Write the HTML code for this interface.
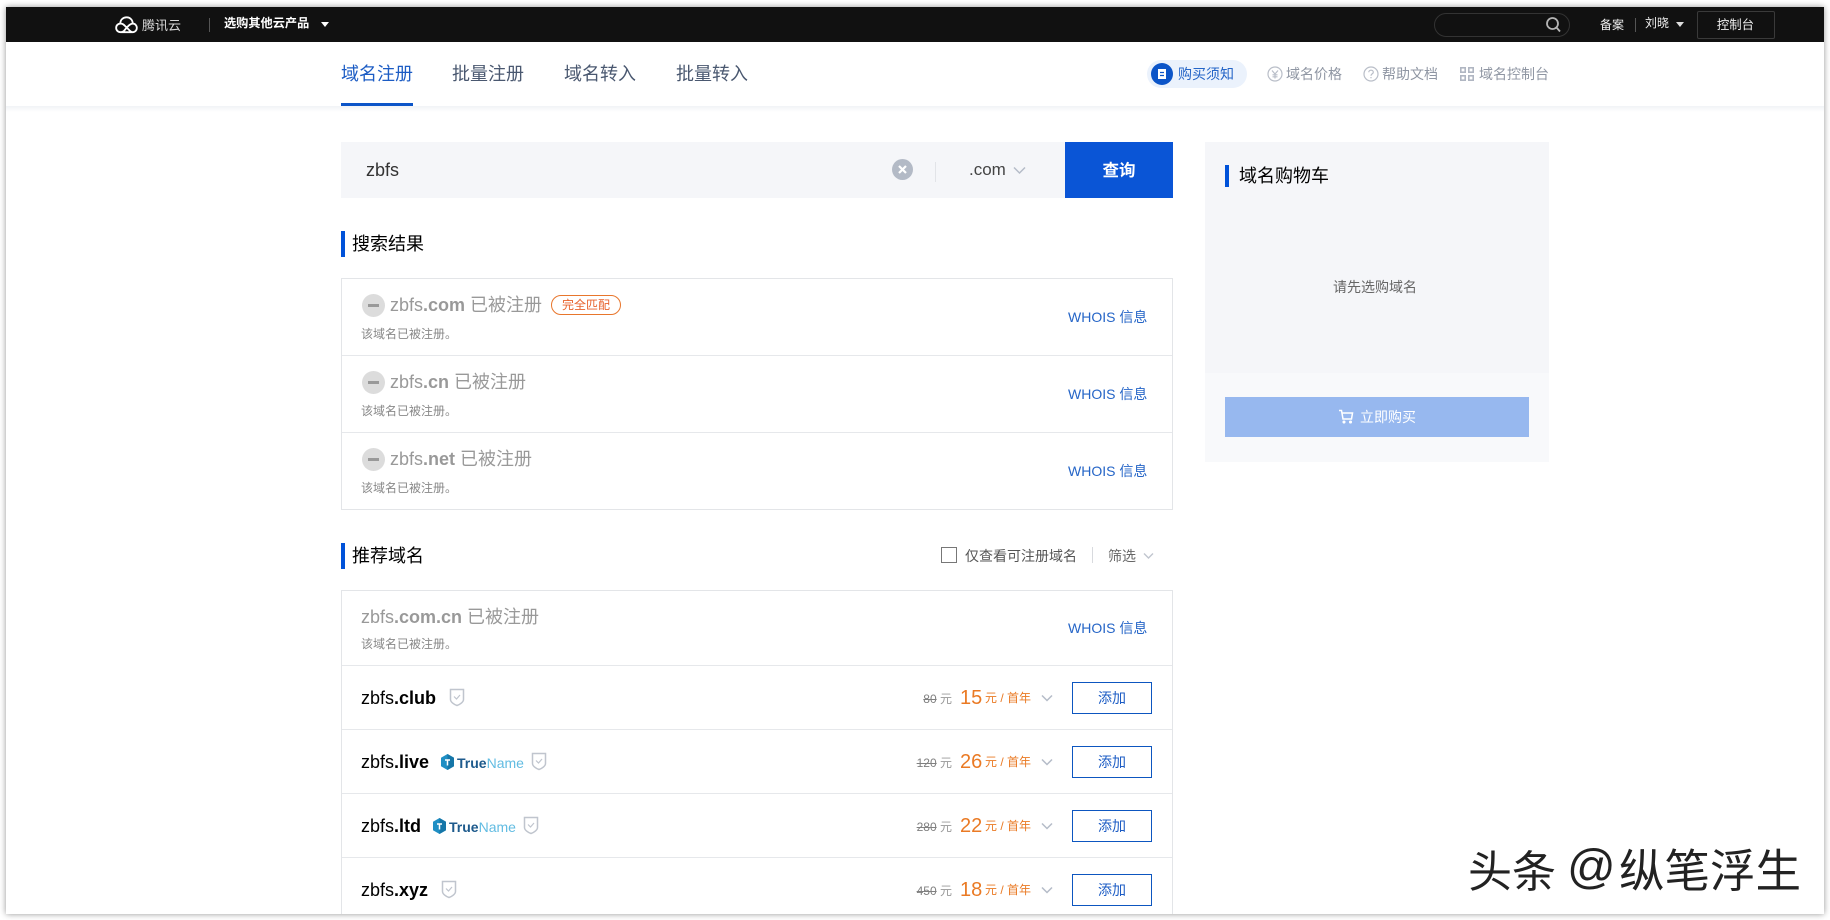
<!DOCTYPE html>
<html lang="zh-CN"><head><meta charset="utf-8"><title>域名注册</title>
<style>
html,body{margin:0;padding:0;background:#fff;width:1830px;height:920px;overflow:hidden}
body{font-family:"Liberation Sans","Noto Sans CJK SC",sans-serif;position:relative}
#w{position:absolute;left:6px;top:7px;width:1818px;height:907px;background:#fff;box-shadow:0 0 6px rgba(0,0,0,.42);}
#clip{position:absolute;left:6px;top:7px;width:1818px;height:907px;overflow:hidden}
#in{position:absolute;left:-6px;top:-7px;width:1830px;height:920px}
.a{position:absolute;white-space:nowrap}
.t{position:absolute;white-space:nowrap;height:20px;line-height:20px}
.tab{font-size:18px;color:#4a5870;top:64px}
.rn{font-size:14px;color:#8f96a3;top:64px}
.h{font-size:18px;color:#000;}
.bar{position:absolute;width:4px;background:#0052d9}
.box{position:absolute;left:341px;width:830px;border:1px solid #e3e5e8;background:#fff}
.line{position:absolute;left:342px;width:830px;height:1px;background:#e6e8eb}
.dm{font-size:18px;color:#999}
.dm b{font-weight:700}
.sub{font-size:12px;color:#888}
.who{font-size:14px;color:#2565c7;}
.name{font-size:18px;color:#000}
.old{font-size:12px;color:#999;text-align:right;width:60px;left:892px}
.old s{color:#808080}
.pr{font-size:20px;color:#ea7a24;left:960px}
.un{font-size:12px;color:#ea7a24;left:985px}
.btn{position:absolute;left:1072px;width:78px;height:30px;border:1px solid #0d56c0;color:#1c5cc4;font-size:14px;line-height:30px;text-align:center;background:#fff}
.tn{font-size:14px;font-weight:700;color:#1d5a8c}
.tn span{color:#62bce2;font-weight:400}
</style></head><body>
<div id="w"></div>
<div id="clip"><div id="in">

<!-- top bar -->
<div class="a" style="left:0;top:7px;width:1830px;height:35px;background:#111"></div>
<svg class="a" style="left:115px;top:16px" width="23" height="18" viewBox="0 0 24 18" fill="none" stroke="#fff" stroke-width="1.900"><path d="M6 16.500C3 16.500 1.200 14.500 1.200 12S3 7.500 6 7.500C7.500 7.500 9 8.300 11 10.500L15 14.500C16.500 16 17.500 16.500 18.500 16.500C21 16.500 22.800 14.500 22.800 12S21 7.500 18.500 7.500C16.500 7.500 15 8.500 12 12L9.500 15C8.500 16 7.500 16.500 6 16.500H18.500"/><path d="M5.500 7.500C5.500 3.500 8.500 1 12 1C15.500 1 18.500 3.500 18.500 7.500"/></svg>
<div class="t" style="left:142px;top:16px;font-size:13px;color:#d8d8d8">腾讯云</div>
<div class="a" style="left:209px;top:18px;width:1px;height:14px;background:#555"></div>
<div class="t" style="left:224px;top:13px;font-size:12.200px;font-weight:700;color:#fff">选购其他云产品</div>
<div class="a" style="left:321px;top:22px;width:0;height:0;border:4px solid transparent;border-top:5px solid #fff;border-bottom:0"></div>

<div class="a" style="left:1434px;top:13px;width:134px;height:22px;border:1px solid #333;border-radius:12px"></div>
<svg class="a" style="left:1545px;top:16px" width="16" height="17" viewBox="0 0 16 17" fill="none" stroke="#b4b4b4" stroke-width="1.800"><circle cx="7.500" cy="7.500" r="5.500"/><path d="M11.500 11.500L15 15.500"/></svg>
<div class="t" style="left:1600px;top:15px;font-size:12px;color:#eee">备案</div>
<div class="a" style="left:1635px;top:18px;width:1px;height:14px;background:#555"></div>
<div class="t" style="left:1645px;top:13px;font-size:12px;color:#eee">刘晓</div>
<div class="a" style="left:1676px;top:22px;width:0;height:0;border:4px solid transparent;border-top:5px solid #ddd;border-bottom:0"></div>
<div class="a" style="left:1697px;top:11px;width:76px;height:26px;border:1px solid #3a3a3a;border-radius:2px;color:#eee;font-size:12.400px;line-height:27px;text-align:center;text-indent:-1px">控制台</div>

<!-- nav -->
<div class="a" style="left:0;top:106px;width:1830px;height:6px;background:linear-gradient(#f1f3f6,#fff)"></div>
<div class="t tab" style="left:341px;color:#1c5cc4">域名注册</div>
<div class="a" style="left:341px;top:103px;width:72px;height:3px;background:#0c55c8"></div>
<div class="t tab" style="left:452px">批量注册</div>
<div class="t tab" style="left:564px">域名转入</div>
<div class="t tab" style="left:676px">批量转入</div>

<div class="a" style="left:1147px;top:60px;width:100px;height:28px;border-radius:14px;background:#ebf2fc"></div>
<div class="a" style="left:1151px;top:63px;width:22px;height:22px;border-radius:50%;background:#0c55c8"></div>
<svg class="a" style="left:1157px;top:68px" width="10" height="12" viewBox="0 0 10 12"><path d="M1 1H9V11H1Z" fill="#fff"/><path d="M3 4.500H7M3 7.500H7" stroke="#0c55c8" stroke-width="1.200"/></svg>
<div class="t rn" style="left:1178px;color:#2565c7">购买须知</div>
<svg class="a" style="left:1267px;top:66px" width="16" height="16" viewBox="0 0 16 16" fill="none" stroke="#b9bec8" stroke-width="1.200"><circle cx="8" cy="8" r="7"/><path d="M5 4.500L8 8L11 4.500M8 8V12.500M5.500 8.800H10.500M5.500 10.800H10.500"/></svg>
<div class="t rn" style="left:1286px">域名价格</div>
<svg class="a" style="left:1363px;top:66px" width="16" height="16" viewBox="0 0 16 16" fill="none" stroke="#b9bec8" stroke-width="1.200"><circle cx="8" cy="8" r="7"/><path d="M5.800 6.200C5.800 3.500 10.300 3.500 10.300 6.200C10.300 7.800 8 7.800 8 9.800M8 11V12.300"/></svg>
<div class="t rn" style="left:1382px">帮助文档</div>
<svg class="a" style="left:1460px;top:67px" width="14" height="14" viewBox="0 0 14 14" fill="none" stroke="#b0b6c2" stroke-width="1.600"><rect x=".8" y=".8" width="4.400" height="4.400"/><rect x="8.800" y=".8" width="4.400" height="4.400"/><rect x=".8" y="8.800" width="4.400" height="4.400"/><rect x="8.800" y="8.800" width="4.400" height="4.400"/></svg>
<div class="t rn" style="left:1479px">域名控制台</div>

<!-- search -->
<div class="a" style="left:341px;top:142px;width:832px;height:56px;background:#f5f6f9"></div>
<div class="t" style="left:366px;top:160px;font-size:18px;color:#333">zbfs</div>
<svg class="a" style="left:892px;top:159px" width="21" height="21" viewBox="0 0 21 21"><circle cx="10.500" cy="10.500" r="10.500" fill="#b3bac6"/><path d="M7 7L14 14M14 7L7 14" stroke="#fff" stroke-width="2.200"/></svg>
<div class="a" style="left:935px;top:162px;width:1px;height:20px;background:#e2e4e8"></div>
<div class="t" style="left:969px;top:160px;font-size:17px;color:#444">.com</div>
<svg class="a" style="left:1013px;top:166px" width="13" height="9" viewBox="0 0 13 9" fill="none" stroke="#b5bcc8" stroke-width="1.500"><path d="M1 1.500L6.500 7L12 1.500"/></svg>
<div class="a" style="left:1065px;top:142px;width:108px;height:56px;background:#0a55d6;color:#fff;font-size:16.500px;font-weight:700;line-height:58px;text-align:center">查询</div>

<!-- results -->
<div class="bar" style="left:341px;top:231px;height:26px"></div>
<div class="t h" style="left:352px;top:234px">搜索结果</div>
<div class="box" style="top:278px;height:230px"></div>
<div class="line" style="top:355px"></div>
<div class="line" style="top:432px"></div>

<div class="a" style="left:362px;top:294px;width:23px;height:23px;border-radius:50%;background:#dcdcdc"></div>
<div class="a" style="left:368px;top:304px;width:11px;height:3px;background:#999"></div>
<div class="t dm" style="left:390px;top:295px">zbfs<b>.com</b> 已被注册</div>
<div class="a" style="left:551px;top:295px;width:68px;height:18px;border:1px solid #e8762c;border-radius:10px;color:#e8622c;font-size:12px;line-height:19px;text-align:center">完全匹配</div>
<div class="t sub" style="left:361px;top:324px">该域名已被注册。</div>
<div class="t who" style="left:1068px;top:307px">WHOIS 信息</div>

<div class="a" style="left:362px;top:371px;width:23px;height:23px;border-radius:50%;background:#dcdcdc"></div>
<div class="a" style="left:368px;top:381px;width:11px;height:3px;background:#999"></div>
<div class="t dm" style="left:390px;top:372px">zbfs<b>.cn</b> 已被注册</div>
<div class="t sub" style="left:361px;top:401px">该域名已被注册。</div>
<div class="t who" style="left:1068px;top:384px">WHOIS 信息</div>

<div class="a" style="left:362px;top:448px;width:23px;height:23px;border-radius:50%;background:#dcdcdc"></div>
<div class="a" style="left:368px;top:458px;width:11px;height:3px;background:#999"></div>
<div class="t dm" style="left:390px;top:449px">zbfs<b>.net</b> 已被注册</div>
<div class="t sub" style="left:361px;top:478px">该域名已被注册。</div>
<div class="t who" style="left:1068px;top:461px">WHOIS 信息</div>

<!-- recommended -->
<div class="bar" style="left:341px;top:543px;height:26px"></div>
<div class="t h" style="left:352px;top:546px">推荐域名</div>
<div class="a" style="left:941px;top:547px;width:14px;height:14px;border:1px solid #777"></div>
<div class="t" style="left:965px;top:546px;font-size:14px;color:#555">仅查看可注册域名</div>
<div class="a" style="left:1092px;top:547px;width:1px;height:16px;background:#d8dade"></div>
<div class="t" style="left:1108px;top:546px;font-size:14px;color:#666">筛选</div>
<svg class="a" style="left:1143px;top:552px" width="11" height="8" viewBox="0 0 11 8" fill="none" stroke="#c0c5ce" stroke-width="1.400"><path d="M1 1.500L5.500 6L10 1.500"/></svg>

<div class="box" style="top:590px;height:340px"></div>
<div class="line" style="top:665px"></div>
<div class="line" style="top:729px"></div>
<div class="line" style="top:793px"></div>
<div class="line" style="top:857px"></div>

<div class="t dm" style="left:361px;top:607px">zbfs<b>.com.cn</b> 已被注册</div>
<div class="t sub" style="left:361px;top:634px">该域名已被注册。</div>
<div class="t who" style="left:1068px;top:618px">WHOIS 信息</div>

<!-- club -->
<div class="t name" style="left:361px;top:688px">zbfs<b>.club</b></div>
<svg class="a" style="left:449px;top:688px" width="16" height="19" viewBox="0 0 16 19" fill="none"><path d="M1.500 1.500H14.500V11.500C14.500 14 11 16.500 8 17.500C5 16.500 1.500 14 1.500 11.500Z" stroke="#c0c5ce" stroke-width="1.500"/><path d="M5 8.500L7.500 11L11 7" stroke="#c0c5ce" stroke-width="1.200"/></svg>
<div class="t old" style="top:689px"><s>80</s> 元</div>
<div class="t pr" style="top:688px">15</div>
<div class="t un" style="top:688px">元 / 首年</div>
<svg class="a" style="left:1041px;top:694px" width="12" height="9" viewBox="0 0 12 9" fill="none" stroke="#b5bcc8" stroke-width="1.500"><path d="M1 1.500L6 6.500L11 1.500"/></svg>
<div class="btn" style="top:682px">添加</div>

<!-- live -->
<div class="t name" style="left:361px;top:752px">zbfs<b>.live</b></div>
<svg class="a" style="left:441px;top:754px" width="13" height="16" viewBox="0 0 13 16"><path d="M6.500 0L13 3.700V12.300L6.500 16L0 12.300V3.700Z" fill="#1f8fc4"/><path d="M6.500 0L13 3.700V12.300L6.500 16Z" fill="#1576a8"/><path d="M4 6H9M6.500 6V11.500" stroke="#fff" stroke-width="1.500"/></svg>
<div class="t tn" style="left:457px;top:753px">True<span>Name</span></div>
<svg class="a" style="left:531px;top:752px" width="16" height="19" viewBox="0 0 16 19" fill="none"><path d="M1.500 1.500H14.500V11.500C14.500 14 11 16.500 8 17.500C5 16.500 1.500 14 1.500 11.500Z" stroke="#c0c5ce" stroke-width="1.500"/><path d="M5 8.500L7.500 11L11 7" stroke="#c0c5ce" stroke-width="1.200"/></svg>
<div class="t old" style="top:753px"><s>120</s> 元</div>
<div class="t pr" style="top:752px">26</div>
<div class="t un" style="top:752px">元 / 首年</div>
<svg class="a" style="left:1041px;top:758px" width="12" height="9" viewBox="0 0 12 9" fill="none" stroke="#b5bcc8" stroke-width="1.500"><path d="M1 1.500L6 6.500L11 1.500"/></svg>
<div class="btn" style="top:746px">添加</div>

<!-- ltd -->
<div class="t name" style="left:361px;top:816px">zbfs<b>.ltd</b></div>
<svg class="a" style="left:433px;top:818px" width="13" height="16" viewBox="0 0 13 16"><path d="M6.500 0L13 3.700V12.300L6.500 16L0 12.300V3.700Z" fill="#1f8fc4"/><path d="M6.500 0L13 3.700V12.300L6.500 16Z" fill="#1576a8"/><path d="M4 6H9M6.500 6V11.500" stroke="#fff" stroke-width="1.500"/></svg>
<div class="t tn" style="left:449px;top:817px">True<span>Name</span></div>
<svg class="a" style="left:523px;top:816px" width="16" height="19" viewBox="0 0 16 19" fill="none"><path d="M1.500 1.500H14.500V11.500C14.500 14 11 16.500 8 17.500C5 16.500 1.500 14 1.500 11.500Z" stroke="#c0c5ce" stroke-width="1.500"/><path d="M5 8.500L7.500 11L11 7" stroke="#c0c5ce" stroke-width="1.200"/></svg>
<div class="t old" style="top:817px"><s>280</s> 元</div>
<div class="t pr" style="top:816px">22</div>
<div class="t un" style="top:816px">元 / 首年</div>
<svg class="a" style="left:1041px;top:822px" width="12" height="9" viewBox="0 0 12 9" fill="none" stroke="#b5bcc8" stroke-width="1.500"><path d="M1 1.500L6 6.500L11 1.500"/></svg>
<div class="btn" style="top:810px">添加</div>

<!-- xyz -->
<div class="t name" style="left:361px;top:880px">zbfs<b>.xyz</b></div>
<svg class="a" style="left:441px;top:880px" width="16" height="19" viewBox="0 0 16 19" fill="none"><path d="M1.500 1.500H14.500V11.500C14.500 14 11 16.500 8 17.500C5 16.500 1.500 14 1.500 11.500Z" stroke="#c0c5ce" stroke-width="1.500"/><path d="M5 8.500L7.500 11L11 7" stroke="#c0c5ce" stroke-width="1.200"/></svg>
<div class="t old" style="top:881px"><s>450</s> 元</div>
<div class="t pr" style="top:880px">18</div>
<div class="t un" style="top:880px">元 / 首年</div>
<svg class="a" style="left:1041px;top:886px" width="12" height="9" viewBox="0 0 12 9" fill="none" stroke="#b5bcc8" stroke-width="1.500"><path d="M1 1.500L6 6.500L11 1.500"/></svg>
<div class="btn" style="top:874px">添加</div>

<!-- cart -->
<div class="a" style="left:1205px;top:142px;width:344px;height:231px;background:#f5f6f9"></div>
<div class="a" style="left:1205px;top:373px;width:344px;height:89px;background:#f8f9fb"></div>
<div class="bar" style="left:1225px;top:165px;height:22px"></div>
<div class="t h" style="left:1239px;top:166px">域名购物车</div>
<div class="t" style="left:1333px;top:277px;font-size:14px;color:#666">请先选购域名</div>
<div class="a" style="left:1225px;top:397px;width:304px;height:40px;background:#97b8ef"></div>
<svg class="a" style="left:1338px;top:409px" width="16" height="15" viewBox="0 0 16 15" fill="none" stroke="#fff" stroke-width="1.500"><path d="M1 1.500H3.500L5 10H13.500L14.500 4H4"/><circle cx="6" cy="13" r=".8"/><circle cx="12.500" cy="13" r=".8"/></svg>
<div class="t" style="left:1360px;top:407px;font-size:14px;color:#fff">立即购买</div>

<!-- watermark -->
<div class="a" style="left:1468px;top:838px;font-size:44px;line-height:60px;color:#222;font-family:'Noto Sans CJK SC',sans-serif">头条</div>
<div class="a" style="left:1567px;top:838px;font-size:48px;line-height:60px;color:#222">@</div>
<div class="a" style="left:1619px;top:838px;font-size:45.500px;line-height:60px;color:#222;font-family:'Noto Sans CJK SC',sans-serif">纵笔浮生</div>

</div></div>
</body></html>
